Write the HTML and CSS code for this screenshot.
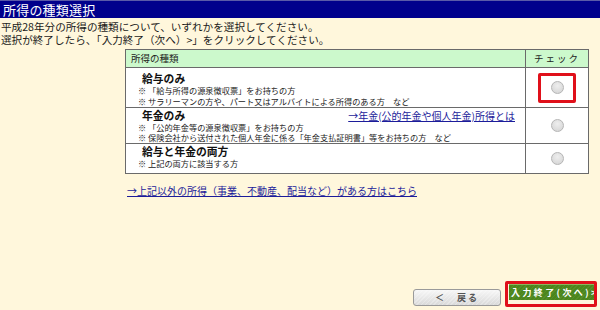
FILE: index.html
```html
<!DOCTYPE html>
<html lang="ja">
<head>
<meta charset="utf-8">
<title>所得の種類選択</title>
<link rel="stylesheet" href="styles.css">
</head>
<body>
<div class="page">
  <header class="titlebar">所得の種類選択</header>
  <p class="intro">平成28年分の所得の種類について、いずれかを選択してください。<br>選択が終了したら、「入力終了（次へ）&gt;」をクリックしてください。</p>
  <div class="kinds" role="table">
    <div class="cell head head-kind">所得の種類</div>
    <div class="cell head head-check">チェック</div>

    <div class="cell kind kind-salary">
      <div class="kind-title">給与のみ</div>
      <div class="note">※ 「給与所得の源泉徴収票」をお持ちの方</div>
      <div class="note">※ サラリーマンの方や、パート又はアルバイトによる所得のある方　など</div>
    </div>
    <div class="cell check"><span class="highlight"><span class="radio"></span></span></div>

    <div class="cell kind kind-pension">
      <div class="kind-head">
        <span class="kind-title">年金のみ</span>
        <a class="link pension-link" href="#">→年金(公的年金や個人年金)所得とは</a>
      </div>
      <div class="note">※ 「公的年金等の源泉徴収票」をお持ちの方</div>
      <div class="note">※ 保険会社から送付された個人年金に係る「年金支払証明書」等をお持ちの方　など</div>
    </div>
    <div class="cell check"><span class="radio"></span></div>

    <div class="cell kind kind-both">
      <div class="kind-title">給与と年金の両方</div>
      <div class="note">※ 上記の両方に該当する方</div>
    </div>
    <div class="cell check"><span class="radio"></span></div>
  </div>
  <a class="link other-link" href="#">→上記以外の所得（事業、不動産、配当など）がある方はこちら</a>
  <div class="actions">
    <button class="btn btn-back" type="button">＜　戻る</button>
    <span class="highlight highlight-next"><button class="btn btn-next" type="button">入力終了(次へ)&gt;</button></span>
  </div>
</div>
</body>
</html>
```

FILE: styles.css
```css
html, body {
  margin: 0;
  padding: 0;
  overflow: hidden;
}

body {
  background: #fff7dc;
  font-family: "Noto Sans CJK JP", "Noto Sans", sans-serif;
  color: #1a1a1a;
}

.page {
  display: flex;
  flex-direction: column;
  height: 310px;
  width: 600px;
}

.titlebar {
  height: 17px;
  background: #00008c;
  border-top: 1px solid #5a5aa8;
  color: #ffffff;
  font-size: 13px;
  line-height: 17px;
  padding-left: 3px;
  letter-spacing: 0.2px;
}

.intro {
  margin: 2px 0 0 1px;
  font-size: 10.6px;
  line-height: 13px;
  letter-spacing: 0;
}

.kinds {
  margin: 3px 0 0 125px;
  width: 464px;
  box-sizing: border-box;
  display: grid;
  grid-template-columns: 1fr 63px;
  grid-template-rows: 18px 40px 36px 30px;
  background: #ffffff;
  border: 1px solid #6a6a6a;
  border-bottom-width: 0;
  border-right-width: 0;
}

.cell {
  box-sizing: border-box;
  border-right: 1px solid #6a6a6a;
  border-bottom: 1px solid #6a6a6a;
  overflow: hidden;
}

.head {
  background: #ccf9cc;
  font-size: 9.5px;
  line-height: 17px;
  color: #222;
}

.head-kind {
  padding-left: 5px;
}

.head-check {
  text-align: center;
  letter-spacing: 2px;
}

.kind {
  padding: 1px 10px 0 12px;
}

.kind-salary {
  padding-top: 4px;
}

.kind-salary .note {
  line-height: 11px;
}

.kind-head {
  display: flex;
  align-items: baseline;
  justify-content: space-between;
}

.kind-title {
  font-size: 10.8px;
  line-height: 13px;
  font-weight: bold;
  color: #111;
  padding-left: 4px;
}

.note {
  font-size: 8.2px;
  line-height: 10px;
  color: #222;
}

.kind-both .note {
  line-height: 11px;
}

.link {
  color: #1c1c9a;
  text-decoration: underline;
}

.pension-link {
  font-size: 10px;
  line-height: 13px;
}

.check {
  display: flex;
  align-items: center;
  justify-content: center;
}

.radio {
  display: inline-block;
  width: 11px;
  height: 11px;
  border-radius: 50%;
  border: 1px solid #b5b5b5;
  background: radial-gradient(circle at 50% 35%, #eeeeee, #d2d2d2);
}

.highlight {
  display: inline-flex;
  align-items: center;
  justify-content: center;
  border: 3px solid #e0101a;
  border-radius: 2px;
  width: 32px;
  height: 24px;
}

.other-link {
  margin: 10px 0 0 127px;
  font-size: 10px;
  line-height: 13px;
  align-self: flex-start;
}

.actions {
  margin-top: auto;
  display: flex;
  align-items: flex-start;
  padding-left: 413px;
  height: 29px;
}

.btn {
  font-family: "Noto Sans CJK JP", "Noto Sans", sans-serif;
  cursor: pointer;
  padding: 0;
}

.btn-back {
  margin-top: 8px;
  width: 88px;
  height: 17px;
  border: 1px solid #9a9a9a;
  border-radius: 3px;
  background: repeating-linear-gradient(135deg, rgba(255,255,255,0.25) 0 1px, rgba(0,0,0,0) 1px 3px), linear-gradient(#f7f7f7, #d9d9d9);
  color: #555;
  font-size: 9px;
  font-weight: bold;
  letter-spacing: 2px;
  line-height: 15px;
}

.highlight-next {
  margin-left: 4px;
  width: 85px;
  height: 20px;
  overflow: hidden;
  justify-content: flex-start;
  align-items: flex-start;
  padding: 0 0 0 1px;
}

.btn-next {
  flex: none;
  width: 100px;
  height: 16px;
  border: none;
  border-top: 1px solid #8ab860;
  background: repeating-linear-gradient(135deg, rgba(255,255,255,0.06) 0 1px, rgba(0,0,0,0) 1px 3px), #4b861c;
  color: #ffffff;
  font-size: 9px;
  font-weight: bold;
  letter-spacing: 2.4px;
  line-height: 15px;
  text-align: left;
  padding-left: 2px;
}
```
